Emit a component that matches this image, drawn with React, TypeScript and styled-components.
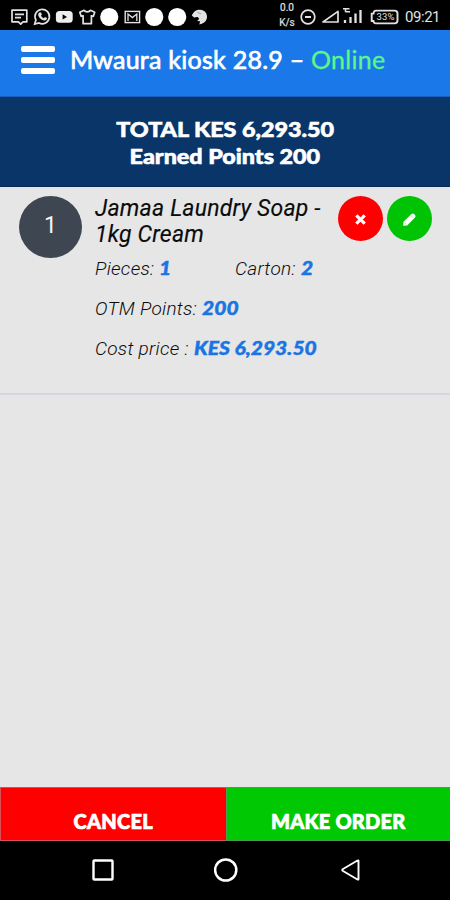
import React from "react";
import styled, { createGlobalStyle } from "styled-components";

const Global = createGlobalStyle`
  * { box-sizing: border-box; }
  html, body { margin: 0; padding: 0; background: #000; }
`;

const brand = `"Lato", sans-serif`;

const Screen = styled.main`
  width: 450px;
  height: 900px;
  display: flex;
  flex-direction: column;
  overflow: hidden;
  background: #e6e6e6;
  font-family: "Roboto", sans-serif;
  color: #0b0b0d;
`;

const StatusBar = styled.div`
  height: 30px;
  flex: none;
  display: flex;
  align-items: center;
  justify-content: space-between;
  padding: 3px 10px 0 8px;
  background: #000;
  color: #e2e2e2;
`;

const Notifications = styled.div`
  display: flex;
  svg { display: block; width: 22.5px; height: 20px; }
`;

const Indicators = styled.div`
  display: flex;
  align-items: center;
  height: 27px;
  svg { display: block; }
`;

const Speed = styled.div`
  width: 23px;
  margin-top: -3px;
  padding-right: 3px;
  font-size: 10px;
  line-height: 15px;
  height: 30px;
  text-align: center;
  white-space: nowrap;
  -webkit-text-stroke: 0.2px #e2e2e2;
`;

const Signals = styled.div`
  margin-right: 5px;
`;

const Clock = styled.span`
  width: 35px;
  margin-left: 5px;
  font-size: 15px;
  line-height: 20px;
  letter-spacing: -0.45px;
  padding-top: 1px;
`;

const Header = styled.header`
  height: 67px;
  flex: none;
  display: flex;
  align-items: flex-start;
  padding: 15px 0 0 21px;
  background: #1a78e8;
  border-bottom: 1px solid #155fbd;
`;

const Menu = styled.button`
  width: 34px;
  height: 28px;
  margin: 1px 0 0;
  padding: 0;
  border: 0;
  background: none;
  display: flex;
  flex-direction: column;
  justify-content: space-between;
`;

const MenuLine = styled.span`
  height: 6px;
  border-radius: 2px;
  background: #fff;
`;

const Title = styled.h1`
  margin: -1px 0 0 15px;
  font: 400 25px/30px ${brand};
  letter-spacing: 0.25px;
  white-space: nowrap;
  color: #fff;
  -webkit-text-stroke: 0.7px currentColor;
`;

const Online = styled.span`
  color: #5cf78c;
  -webkit-text-stroke: 0.3px currentColor;
`;

const Summary = styled.section`
  height: 90px;
  flex: none;
  display: flex;
  flex-direction: column;
  align-items: center;
  padding-top: 19px;
  background: #0a3568;
  border-bottom: 1px solid #082656;
  color: #fff;
`;

const SummaryLine = styled.div`
  font: 900 21px/26.5px ${brand};
  -webkit-text-stroke: 0.6px currentColor;
  transform: scaleX(1.11);
`;

const Item = styled.article`
  height: 208px;
  flex: none;
  display: flex;
  align-items: flex-start;
  padding: 9px 18px 0 19px;
  border-bottom: 2px solid #d2d7e2;
`;

const Index = styled.div`
  width: 63px;
  height: 62px;
  flex: none;
  border-radius: 50%;
  background: #3d4651;
  color: #f2f4f6;
  font-size: 23px;
  line-height: 60px;
  text-align: center;
`;

const Details = styled.div`
  width: 243px;
  margin-left: 13px;
  font-style: italic;
`;

const Name = styled.h2`
  width: 240px;
  margin: 0;
  font-size: 23px;
  font-weight: 400;
  line-height: 26px;
  letter-spacing: 0.2px;
  white-space: nowrap;
  -webkit-text-stroke: 0.15px currentColor;
`;

const Facts = styled.div`
  display: grid;
  grid-template-columns: 140px 110px;
  grid-auto-rows: 40px;
  margin-top: 1px;
`;

const Fact = styled.div<{ $wide?: boolean }>`
  grid-column: ${(p) => (p.$wide ? "1 / -1" : "auto")};
  font-size: 19px;
  font-weight: 300;
  line-height: 40px;
  letter-spacing: 0.28px;
  white-space: nowrap;
`;

const Value = styled.b`
  display: inline-block;
  font: italic 900 18px/20px ${brand};
  letter-spacing: 0;
  color: #1a75e2;
  -webkit-text-stroke: 0.4px currentColor;
  transform: scaleX(1.17);
  transform-origin: left center;
`;

const Actions = styled.div`
  display: flex;
  gap: 4px;
  margin-left: auto;
`;

const RoundButton = styled.button<{ $color: string }>`
  width: 45px;
  height: 45px;
  padding: 2px 0 0;
  border: 0;
  border-radius: 50%;
  display: grid;
  place-items: center;
  background: ${(p) => p.$color};
`;

const Space = styled.div`
  flex: 1;
`;

const Footer = styled.footer`
  height: 54px;
  flex: none;
  display: grid;
  grid-template-columns: 225.5px 224.5px;
`;

const FooterButton = styled.button<{ $color: string; $edge: string }>`
  padding: 15px 0 0;
  border: 1px solid ${(p) => p.$edge};
  border-width: 1px 0 1px 1px;
  background: ${(p) => p.$color};
  color: #fff;
  font: 900 20px/24px ${brand};
  letter-spacing: 0.25px;
  text-align: center;
  -webkit-text-stroke: 0.7px currentColor;
`;

const NavBar = styled.nav`
  height: 59.5px;
  flex: none;
  display: flex;
  justify-content: center;
  gap: 98px;
  padding: 16.5px 0 0 3px;
  background: #000;
  svg { display: block; }
`;

const line = { fill: "none", stroke: "#e2e2e2", strokeWidth: 1.7 } as const;

const ChatIcon = () => (
  <svg viewBox="0 0 22.5 20">
    <path {...line} d="M4 3.2h14.8v11.6H15l-2.3 2.3-2.3-2.3H4z" strokeLinejoin="round" />
    <path {...line} d="M7 7.4h9M7 10.6h6" />
  </svg>
);

const WhatsAppIcon = () => (
  <svg viewBox="0 0 22.5 20">
    <path {...line} d="M3.7 17l1.2-4A7.2 7.2 0 1 1 8 16z" />
    <path
      fill="#e2e2e2"
      d="M8.7 5.3l1.3.1.9 2.2-.9 1.2c.7 1.2 1.6 1.9 2.8 2.4l1.1-1.2 2.1 1.1c0 1.7-1.4 2.5-2.8 2.3-3.3-.6-5.8-3.2-6-5.7 0-1.1.8-2 1.5-2.4z"
    />
  </svg>
);

const YouTubeIcon = () => (
  <svg viewBox="0 0 22.5 20">
    <rect x="2.9" y="4" width="16.8" height="11.8" rx="3.6" fill="#eee" />
    <path d="M9.6 7.3v5.2l4.4-2.6z" fill="#000" />
  </svg>
);

const ShirtIcon = () => (
  <svg viewBox="0 0 22.5 20">
    <path
      {...line}
      strokeLinejoin="round"
      d="M8 3.3c1.3 2 5.2 2 6.5 0l4.2 2-1.3 4-2-.6v8H7.1v-8l-2 .6-1.3-4z"
    />
  </svg>
);

const DotIcon = () => (
  <svg viewBox="0 0 22.5 20">
    <circle cx="11.25" cy="10" r="9.1" fill="#fff" />
  </svg>
);

const MailIcon = () => (
  <svg viewBox="0 0 22.5 20">
    <rect x="4.2" y="4.4" width="14.4" height="11.2" {...line} strokeWidth={1.4} />
    <path {...line} strokeWidth={1.3} d="M7 14V7l4.4 3.6L15.8 7v7" />
  </svg>
);

const HelmetIcon = () => (
  <svg viewBox="0 0 22.5 20">
    <path
      fill="#e2e2e2"
      d="M3.8 8.5C5.5 4 9 2.4 12.300 2.700c4.300.4 6.900 3.500 6.700 7.300-.2 4-3.200 6.700-7.600 7.500l.6-3.200-2.800-.2 2-2.300-1.500-1.800-3.700.6z"
    />
    <path d="M9.500 5.500l3.500 1.300" stroke="#888" strokeWidth=".8" fill="none" />
  </svg>
);

const DoNotDisturbIcon = () => (
  <svg width="16" height="16" viewBox="0 0 16 16">
    <circle cx="8" cy="8" r="6.8" {...line} />
    <path d="M5 8h6" {...line} strokeWidth={2} />
  </svg>
);

const SignalIcons = () => (
  <svg width="48" height="20" viewBox="0 0 48 20">
    <path d="M7 15H22V4.4z" {...line} strokeLinejoin="round" />
    <path d="M27 1.8h6.5M29.5 1.8v3.500M30 4.800h4" {...line} strokeWidth={1.5} />
    <path d="M29 16v-3M34.5 16v-6M39.5 16V6.5M44.5 16V3" {...line} strokeWidth={2.3} />
  </svg>
);

const BatteryIcon = () => (
  <svg width="31" height="18" viewBox="0 0 31 18">
    <path
      d="M7 2.6h18.5q3 0 3 2.8v7.2q0 2.8-3 2.8H7q-2.3 0-2.5-2.4H2.7V5.6h1.800Q4.700 2.600 7 2.600z"
      {...line}
      strokeWidth={1.9}
    />
    <text x="16.5" y="12.4" textAnchor="middle" fontFamily="Roboto" fontSize="9.5" fill="#e2e2e2" textLength="18">
      33%
    </text>
  </svg>
);

const CrossIcon = () => (
  <svg width="13" height="13" viewBox="0 0 13 13">
    <path d="M2.3 2.3l8.4 8.4M10.7 2.3l-8.4 8.4" stroke="#fff" strokeWidth="3.2" />
  </svg>
);

const PencilIcon = () => (
  <svg width="15" height="15" viewBox="0 0 15 15">
    <path
      d="M1.2 13.8l.3-4.1 7.900-7.700q1.400-1.200 2.700 0l.9.9q1.300 1.400 0 2.700l-7.800 7.800z"
      fill="#fff"
    />
    <path d="M8.9 3.9l2.3 2.3M2.6 10.7l1.7 1.7" stroke="#8be68b" strokeWidth=".6" />
  </svg>
);

const RecentsIcon = () => (
  <svg width="26" height="26" viewBox="0 0 26 26">
    <rect x="3.5" y="3.5" width="19" height="19" rx=".8" fill="none" stroke="#fff" strokeWidth="2.4" />
  </svg>
);

const HomeIcon = () => (
  <svg width="26" height="26" viewBox="0 0 26 26">
    <circle cx="11.7" cy="13" r="10.6" fill="none" stroke="#fff" strokeWidth="2.5" />
  </svg>
);

const BackIcon = () => (
  <svg width="26" height="26" viewBox="0 0 26 26">
    <path d="M20.5 4v18q0 1-1 .5L5 14q-1.5-1 0-2L19.5 3.5q1-.5 1 .5z" fill="none" stroke="#fff" strokeWidth="1.9" strokeLinejoin="round" />
  </svg>
);

export default function App() {
  return (
    <Screen>
      <Global />
      <StatusBar>
        <Notifications>
          <ChatIcon />
          <WhatsAppIcon />
          <YouTubeIcon />
          <ShirtIcon />
          <DotIcon />
          <MailIcon />
          <DotIcon />
          <DotIcon />
          <HelmetIcon />
        </Notifications>
        <Indicators>
          <Speed>
            0.0
            <br />
            K/s
          </Speed>
          <DoNotDisturbIcon />
          <Signals>
            <SignalIcons />
          </Signals>
          <BatteryIcon />
          <Clock>09:21</Clock>
        </Indicators>
      </StatusBar>
      <Header>
        <Menu aria-label="Menu">
          <MenuLine />
          <MenuLine />
          <MenuLine />
        </Menu>
        <Title>
          Mwaura kiosk 28.9 – <Online>Online</Online>
        </Title>
      </Header>
      <Summary>
        <SummaryLine>TOTAL KES 6,293.50</SummaryLine>
        <SummaryLine>Earned Points 200</SummaryLine>
      </Summary>
      <Item>
        <Index>1</Index>
        <Details>
          <Name>
            Jamaa Laundry Soap -<br />
            1kg Cream
          </Name>
          <Facts>
            <Fact>
              Pieces: <Value>1</Value>
            </Fact>
            <Fact>
              Carton: <Value>2</Value>
            </Fact>
            <Fact $wide>
              OTM Points: <Value>200</Value>
            </Fact>
            <Fact $wide>
              Cost price : <Value>KES 6,293.50</Value>
            </Fact>
          </Facts>
        </Details>
        <Actions>
          <RoundButton $color="#fe0000" aria-label="Remove">
            <CrossIcon />
          </RoundButton>
          <RoundButton $color="#00c303" aria-label="Edit">
            <PencilIcon />
          </RoundButton>
        </Actions>
      </Item>
      <Space />
      <Footer>
        <FooterButton $color="#fe0000" $edge="#d8505a">
          CANCEL
        </FooterButton>
        <FooterButton $color="#00c904" $edge="#45a052">
          MAKE ORDER
        </FooterButton>
      </Footer>
      <NavBar>
        <RecentsIcon />
        <HomeIcon />
        <BackIcon />
      </NavBar>
    </Screen>
  );
}
